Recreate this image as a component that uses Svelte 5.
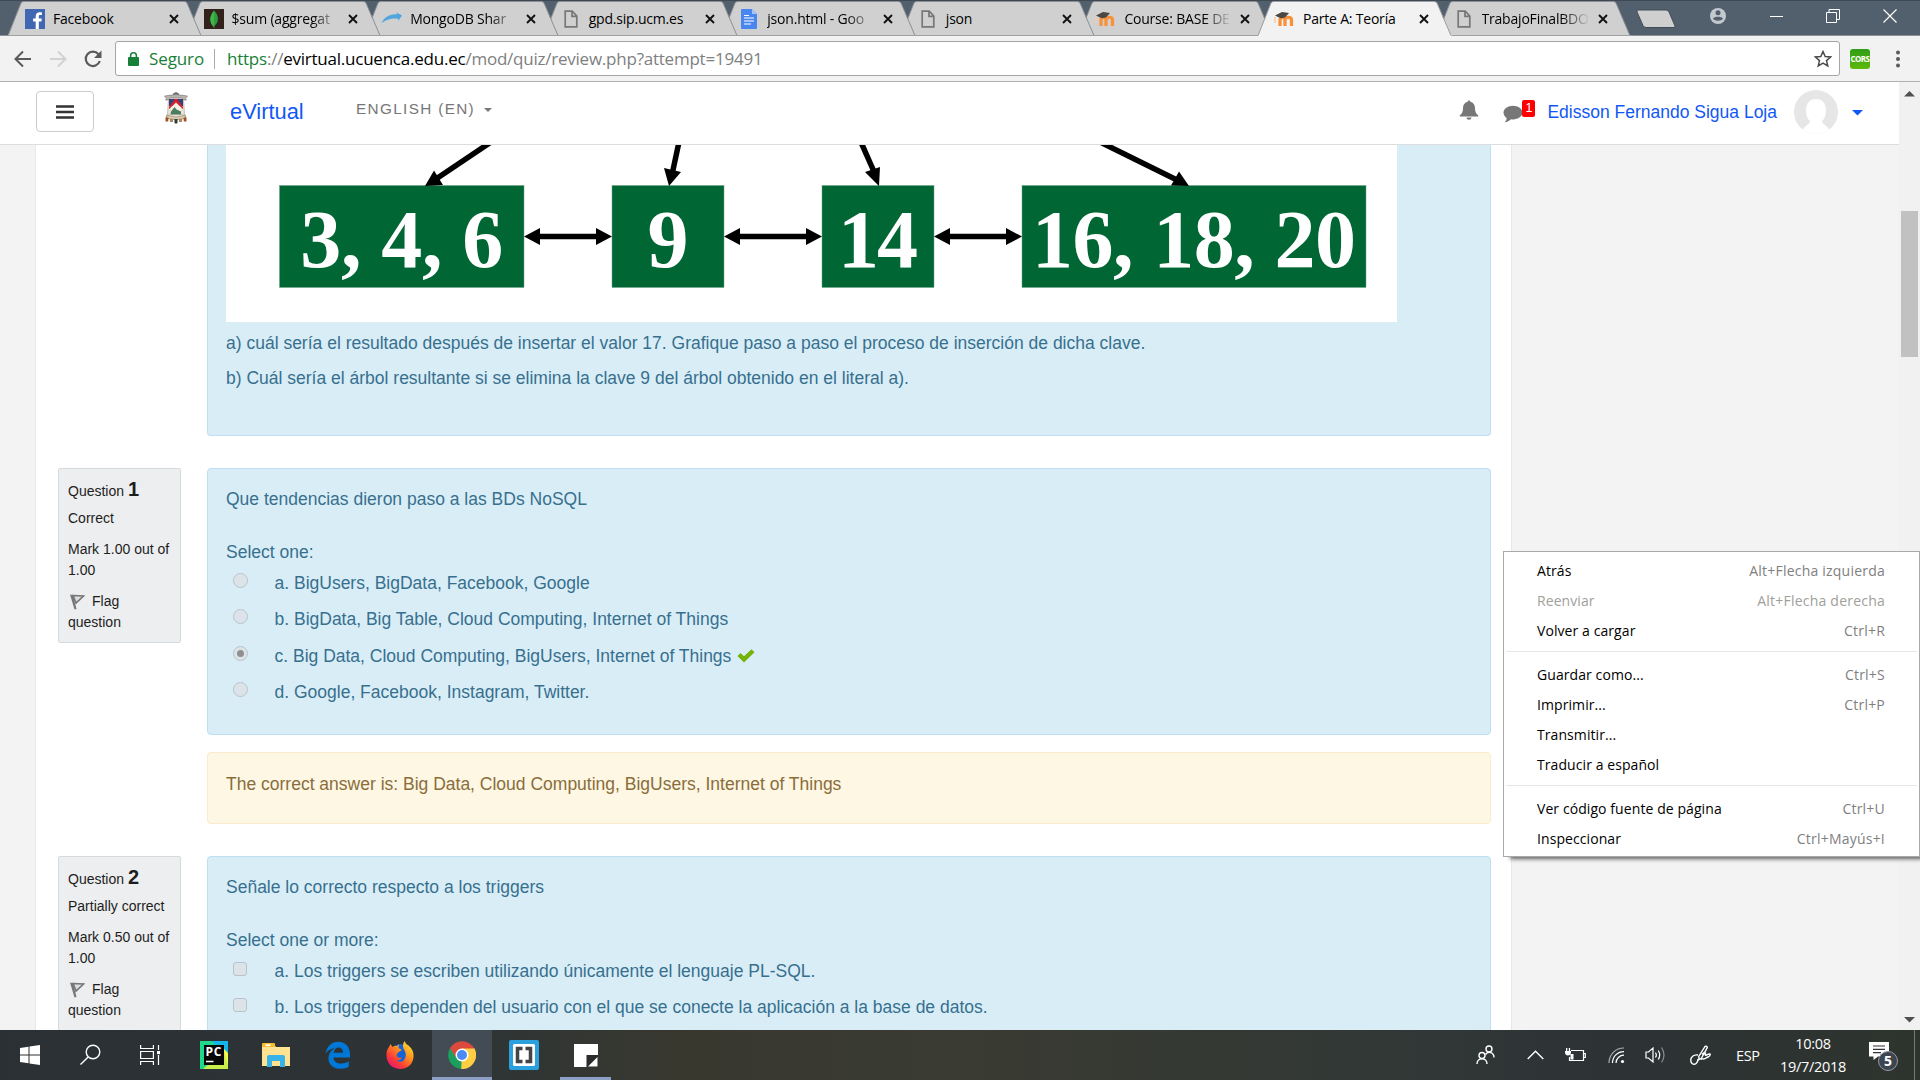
<script>
  const tabs = [
    { icon: 'facebook', title: 'Facebook' },
    { icon: 'leaf', title: '$sum (aggregat', fade: true },
    { icon: 'swoosh', title: 'MongoDB Shar', fade: true },
    { icon: 'page', title: 'gpd.sip.ucm.es' },
    { icon: 'doc', title: 'json.html - Goo', fade: true },
    { icon: 'page', title: 'json' },
    { icon: 'moodle', title: 'Course: BASE DE', fade: true },
    { icon: 'moodle', title: 'Parte A: Teoría', active: true },
    { icon: 'page', title: 'TrabajoFinalBDO', fade: true },
  ];

  const questions = [
    {
      number: 1,
      state: 'Correct',
      mark: 'Mark 1.00 out of 1.00',
      text: 'Que tendencias dieron paso a las BDs NoSQL',
      prompt: 'Select one:',
      kind: 'radio',
      options: [
        { text: 'a. BigUsers, BigData, Facebook, Google' },
        { text: 'b. BigData, Big Table, Cloud Computing, Internet of Things' },
        { text: 'c. Big Data, Cloud Computing, BigUsers, Internet of Things', checked: true },
        { text: 'd. Google, Facebook, Instagram, Twitter.' },
      ],
      feedback: 'The correct answer is: Big Data, Cloud Computing, BigUsers, Internet of Things',
    },
    {
      number: 2,
      state: 'Partially correct',
      mark: 'Mark 0.50 out of 1.00',
      text: 'Señale lo correcto respecto a los triggers',
      prompt: 'Select one or more:',
      kind: 'box',
      options: [
        { text: 'a. Los triggers se escriben utilizando únicamente el lenguaje PL-SQL.' },
        { text: 'b. Los triggers dependen del usuario con el que se conecte la aplicación a la base de datos.' },
      ],
    },
  ];

  const menu = [
    [
      { label: 'Atrás', keys: 'Alt+Flecha izquierda' },
      { label: 'Reenviar', keys: 'Alt+Flecha derecha', disabled: true },
      { label: 'Volver a cargar', keys: 'Ctrl+R' },
    ],
    [
      { label: 'Guardar como...', keys: 'Ctrl+S' },
      { label: 'Imprimir...', keys: 'Ctrl+P' },
      { label: 'Transmitir...', keys: '' },
      { label: 'Traducir a español', keys: '' },
    ],
    [
      { label: 'Ver código fuente de página', keys: 'Ctrl+U' },
      { label: 'Inspeccionar', keys: 'Ctrl+Mayús+I' },
    ],
  ];

  const nodes = [
    { x: 53.5, w: 244.5, text: '3, 4, 6', len: 203 },
    { x: 386, w: 112, text: '9', len: 40 },
    { x: 596, w: 112, text: '14', len: 80 },
    { x: 796, w: 344, text: '16, 18, 20', len: 324 },
  ];
  const links = [[298, 386], [498, 596], [708, 796]];
</script>

<div class="screen">
  <div class="tabstrip">
    <div class="tabs">
      {#each tabs as tab, i}
        <div class="tab" class:active={tab.active} style:z-index={tab.active ? 20 : 10 - i}>
          <svg class="shape" viewBox="0 0 194 36" width="194" height="36">
            <path d="M0 36 L1 34 L13 3 Q14 1.5 16 1.5 H176 Q178 1.5 179 3 L192 34 L194 36 Z" class="fill" />
            <path d="M0 35.5 L13 3 Q14 1.5 16 1.5 H176 Q178 1.5 179 3 L193 35.5" class="edge" />
            {#if !tab.active}<path d="M0 35.5 H194" class="base" />{/if}
          </svg>
          <div class="tabbody">
            <span class="fav">
              {#if tab.icon === 'facebook'}
                <svg width="20" height="20" viewBox="0 0 20 20"><rect width="20" height="20" fill="#4267b2" /><path d="M13.8 20v-7.6h2.6l.4-3h-3V7.500c0-.9.3-1.400 1.500-1.400h1.600V3.400c-.3 0-1.200-.1-2.300-.1-2.300 0-3.900 1.400-3.900 4v2.100H8.100v3h2.600V20z" fill="#fff" /></svg>
              {:else if tab.icon === 'leaf'}
                <svg width="20" height="20" viewBox="0 0 20 20"><rect width="20" height="20" fill="#33211b" /><path d="M10 1.500c3 3 4.300 6 3.800 9.500-.4 3-1.800 4.500-3.300 5.800V19h-.8v-2.200C7.800 15.500 6.500 13.500 6.300 11 6 7.500 7.500 4.500 10 1.500z" fill="#2f9e41" /><path d="M10 2v16c-2-1.500-3.500-4-3.600-7C6.200 7.500 7.800 4.500 10 2z" fill="#41b648" /></svg>
              {:else if tab.icon === 'swoosh'}
                <svg width="22" height="20" viewBox="0 0 22 20"><path d="M.5 14C3 8.500 9 4.500 16 5.400L15.500 3.500 21 6.500 17.500 11.500 17 9.800C10.500 8.800 5 10.800 .5 14z" fill="#4fa5dc" /></svg>
              {:else if tab.icon === 'doc'}
                <svg width="16" height="20" viewBox="0 0 16 20"><path d="M1 0h10l5 5v14a1 1 0 0 1-1 1H1a1 1 0 0 1-1-1V1a1 1 0 0 1 1-1z" fill="#4a86f0" /><path d="M11 0l5 5h-5z" fill="#a6c5fa" /><path d="M3 9h10M3 12h10M3 15h7M3 6.500h5" stroke="#fff" stroke-width="1.200" /></svg>
              {:else if tab.icon === 'moodle'}
                <svg width="22" height="18" viewBox="0 0 22 18"><path d="M6 16V10c0-3 5-3.500 5 0v6M11 16v-6c0-3.500 6.500-3.500 6.500 0v6" fill="none" stroke="#f7923a" stroke-width="3.300" /><path d="M1 7v6" stroke="#f8c9a0" stroke-width="1.500" /><path d="M1 5.500L8 2l7 1-4 4.500-4 .7-2.500-1z" fill="#4a4745" /></svg>
              {:else}
                <svg width="14" height="18" viewBox="0 0 14 18"><path d="M1.200 1.200h7L12.800 6v10.800H1.200zM8 1.200V6.300h4.800" fill="none" stroke="#777" stroke-width="1.700" /></svg>
              {/if}
            </span>
            <span class="title" class:fade={tab.fade}>{tab.title}</span>
            <svg class="close" width="10" height="10" viewBox="0 0 10 10"><path d="M1 1l8 8M9 1l-8 8" stroke="#111" stroke-width="1.900" /></svg>
          </div>
        </div>
      {/each}
    </div>
    <svg class="newtab" width="41" height="20" viewBox="0 0 41 20"><path d="M2.500 1H30q2 0 3 2l6 14q.5 1.500-1 1.500H10q-2 0-3-2L1 3Q.5 1 2.500 1z" fill="#cfcfcf" stroke="#434d58" /></svg>
    <div class="winbtns">
      <svg width="18" height="18" viewBox="0 0 18 18"><circle cx="9" cy="9" r="8" fill="#c4c9ce" /><circle cx="9" cy="5.800" r="2.500" fill="#525f6d" /><path d="M4 11.500c1.500-2.500 8.500-2.500 10 0-1.500 3-8.500 3-10 0z" fill="#525f6d" /></svg>
      <svg width="14" height="14" viewBox="0 0 14 14"><path d="M0 7.500h13" stroke="#fff" /></svg>
      <svg width="14" height="14" viewBox="0 0 14 14"><path d="M.5 3.500h10v10H.5zM3 3V.5h10.500v10H11" fill="none" stroke="#fff" /></svg>
      <svg width="14" height="14" viewBox="0 0 14 14"><path d="M.5 .5l13 13M13.500 .5l-13 13" stroke="#fff" stroke-width="1.200" /></svg>
    </div>
  </div>

  <div class="toolbar">
    <svg width="18" height="18" viewBox="0 0 18 18"><path d="M17 9H2M9 1.500L1.500 9 9 16.500" fill="none" stroke="#5a5a5a" stroke-width="2" /></svg>
    <svg width="18" height="18" viewBox="0 0 18 18"><path d="M1 9h15M9 1.500L16.500 9 9 16.500" fill="none" stroke="#d2d2d2" stroke-width="2" /></svg>
    <svg width="18" height="18" viewBox="0 0 18 18"><path d="M15.800 11A7.200 7.200 0 1 1 14.500 4.200" fill="none" stroke="#5a5a5a" stroke-width="2.200" /><path d="M17.500 .5v7.500H10z" fill="#5a5a5a" /></svg>
    <div class="omnibox">
      <svg width="11" height="14" viewBox="0 0 11 14"><rect y="5" width="11" height="9" rx="1" fill="#188038" /><path d="M2.600 6V3.700a2.900 2.900 0 0 1 5.800 0V6" fill="none" stroke="#188038" stroke-width="1.500" /></svg>
      <span class="secure">Seguro</span>
      <i></i>
      <span class="url"><b>https</b>://<em>evirtual.ucuenca.edu.ec</em>/mod/quiz/review.php?attempt=19491</span>
      <svg class="star" width="18" height="18" viewBox="0 0 18 18"><path d="M9 1.500l2.200 5 5.500.5-4.200 3.600 1.300 5.400L9 13.200 4.200 16l1.300-5.400L1.300 7l5.500-.5z" fill="none" stroke="#4a4a4a" stroke-width="1.500" /></svg>
    </div>
    <div class="cors">CORS</div>
    <svg class="dots" width="4" height="18" viewBox="0 0 4 18"><g fill="#5a5a5a"><circle cx="2" cy="2.500" r="2" /><circle cx="2" cy="9" r="2" /><circle cx="2" cy="15.500" r="2" /></g></svg>
  </div>

  <div class="viewport">
    <div class="page">
      <header>
        <div class="burger"><svg width="18" height="14" viewBox="0 0 18 14"><path d="M0 1.500h18M0 7h18M0 12.500h18" stroke="#333" stroke-width="2.600" /></svg></div>
        <svg class="crest" width="24" height="32" viewBox="0 0 24 32">
          <path d="M9 1.500l3-1.500 3 1.500v2.500H9z" fill="#77736c" />
          <path d="M.5 4q11.500-3 23 0l-2 2.500 1 1.500h-3L18 6H6L4.500 8h-3l1-1.500z" fill="#b9b4ad" stroke="#777" stroke-width=".6" />
          <path d="M4.500 7h15l1 16h-17z" fill="#e9e4da" stroke="#a59a85" stroke-width=".6" />
          <path d="M5 7h14v7H5z" fill="#39407d" />
          <path d="M5 15L11 7h2l6 8v2l-7-6-7 6z" fill="#d3232b" />
          <path d="M12 10.500l5 5v5l-5 2-5-2v-5z" fill="#f5f3ea" />
          <path d="M7 19.500l3.500-4.500 2 2.500 4.500 2v3H6.500z" fill="#4d7d5e" />
          <path d="M2.500 23.500q9.500 3 19 0v3q-9.500 2-19 0z" fill="#ddd2bd" stroke="#8d7349" stroke-width=".7" />
          <path d="M1.500 25.500h2.800v4H1.500zM19.700 25.500h2.800v4h-2.800z" fill="#a5502c" />
          <path d="M6 27h3v3H6zM15 27h3v3h-3z" fill="#a08a60" />
          <path d="M10.500 27h3v3.500L12 32l-1.500-1.500z" fill="#35353c" />
        </svg>
        <span class="brand">eVirtual</span>
        <span class="lang">ENGLISH (EN)</span>
        <svg class="langcaret" width="8" height="4" viewBox="0 0 8 4"><path d="M0 0h8L4 4z" fill="#777" /></svg>
        <div class="user">
          <svg width="20" height="20" viewBox="0 0 20 20"><path d="M10 .5c.8 0 1.300.5 1.300 1.300C14.300 2.500 16 4.800 16 8c0 4 1.300 6 3.200 7.300v1.200H.8v-1.200C2.700 14 4 12 4 8c0-3.200 1.700-5.500 4.700-6.200C8.700 1 9.200.5 10 .5zM7.500 17.500h5a2.500 2.200 0 0 1-5 0z" fill="#777" /></svg>
          <span class="chat">
            <svg width="20" height="18" viewBox="0 0 20 18"><path d="M10 .8c5.200 0 9.500 3 9.500 6.800s-4.300 6.800-9.500 6.800c-.7 0-1.300 0-2-.2C6.500 15.700 4.300 17 1.700 17.300c1.300-1.300 2-2.700 2-4.200C1.700 11.800.5 9.800.5 7.600.5 3.800 4.800.8 10 .8z" fill="#777" /></svg>
            <span class="badge">1</span>
          </span>
          <span class="name">Edisson Fernando Sigua Loja</span>
          <svg class="avatar" width="44" height="44" viewBox="0 0 44 44"><defs><clipPath id="round"><circle cx="22" cy="22" r="22" /></clipPath></defs><g clip-path="url(#round)"><rect width="44" height="44" fill="#e6e6e6" /><path d="M22 9c6 0 10 4.500 10 11 0 5-1.500 9-4 11 0 3 6 5 8 10v4H8v-4c2-5 8-7 8-10-2.500-2-4-6-4-11C12 13.500 16 9 22 9z" fill="#fff" /></g></svg>
          <svg width="12" height="6" viewBox="0 0 12 6"><path d="M0 0h11L5.500 5.500z" fill="#1157f5" /></svg>
        </div>
      </header>

      <div class="scroll">
        <main>
          <section class="blue intro">
            <svg class="tree" width="1171" height="177" viewBox="0 0 1171 177">
              <rect width="1171" height="177" fill="#fff" />
              {#each nodes as n}
                <rect x={n.x} y="40.500" width={n.w} height="102" fill="#006633" stroke="#6fa287" stroke-width=".5" />
                <text x={n.x + n.w / 2} y="121.500" textLength={n.len}>{n.text}</text>
              {/each}
              {#each links as [a, b]}
                <path d="M{a + 10} 91.500H{b - 10}" stroke="#000" stroke-width="5.500" />
                <path d="M{a} 91.500l16-8.500v17zM{b} 91.500l-16-8.500v17z" />
              {/each}
              <g stroke="#000" stroke-width="5.500">
                <path d="M265 -3L207 36" /><path d="M453 -3L445.500 32" /><path d="M634 -5L649.500 30" /><path d="M872 -4L953 36" />
              </g>
              <path d="M199 41l9-15.500 9 14.500zM443 41l-5-18 17 4zM653 41l-14-14 15-5zM963 41l-10-14.500-8 14z" />
            </svg>
            <p>a) cuál sería el resultado después de insertar el valor 17. Grafique paso a paso el proceso de inserción de dicha clave.</p>
            <p>b) Cuál sería el árbol resultante si se elimina la clave 9 del árbol obtenido en el literal a).</p>
          </section>

          {#each questions as q}
            <article>
              <aside>
                <div class="no">Question <strong>{q.number}</strong></div>
                <div class="state">{q.state}</div>
                <div class="mark">{q.mark}</div>
                <div class="flag"><svg width="16" height="17" viewBox="0 0 16 17"><path d="M1 1.500l3 .8L7.500 16l-2 .5z" fill="#777" /><path d="M4 2.500l10.500.5L7 10z" fill="#ddd" stroke="#777" stroke-width="1.700" /></svg>Flag question</div>
              </aside>
              <div class="content">
                <section class="blue question">
                  <div class="qtext">{q.text}</div>
                  <div class="prompt">{q.prompt}</div>
                  {#each q.options as o}
                    <div class="option">
                      <span class={q.kind} class:checked={o.checked}></span>
                      <span>{o.text}</span>
                      {#if o.checked}<svg class="tick" width="18" height="14" viewBox="0 0 18 14"><path d="M.5 7l3-3L7 7.300 14.500 .3l3 2.900L7 13.500z" fill="#74b40a" /></svg>{/if}
                    </div>
                  {/each}
                </section>
                {#if q.feedback}<section class="feedback">{q.feedback}</section>{/if}
              </div>
            </article>
          {/each}
        </main>
      </div>
    </div>
    <div class="scrollbar">
      <svg width="11" height="6" viewBox="0 0 11 6"><path d="M0 5.500L5.500 0 11 5.500z" fill="#505050" /></svg>
      <div class="thumb"></div>
      <svg class="down" width="11" height="6" viewBox="0 0 11 6"><path d="M0 0L5.500 5.500 11 0z" fill="#505050" /></svg>
    </div>

    <div class="menu">
      {#each menu as group}
        <div class="group">
          {#each group as item}
            <div class="item" class:disabled={item.disabled}><span>{item.label}</span><kbd>{item.keys}</kbd></div>
          {/each}
        </div>
      {/each}
    </div>
  </div>

  <div class="taskbar">
    <div class="apps">
      <div class="app"><svg width="20" height="20" viewBox="0 0 20 20"><path d="M0 3l8.500-1.200v7.700H0zM9.500 1.600L20 0v9.500H9.500zM0 10.500h8.500v7.700L0 17zM9.500 10.500H20V20L9.500 18.500z" fill="#fff" /></svg></div>
      <div class="app"><svg width="22" height="22" viewBox="0 0 22 22"><circle cx="14" cy="8" r="6.800" fill="none" stroke="#fff" stroke-width="1.400" /><path d="M9.200 13L1.500 20.500" stroke="#fff" stroke-width="1.400" /></svg></div>
      <div class="app"><svg width="21" height="20" viewBox="0 0 21 20"><path d="M.6 0v3.500h12.800V0M.6 20v-3.500h12.800V20M.6 6.500h12.800v7H.6zM18.500 0v5M18.500 10v10" fill="none" stroke="#fff" stroke-width="1.200" /><path d="M17 6h3v3.200h-3z" fill="#fff" /></svg></div>
      <div class="app"><svg width="28" height="28" viewBox="0 0 28 28"><rect width="28" height="28" fill="#21d789" /><path d="M11 0h17v14L18 6z" fill="#12b6e8" /><path d="M10 28l13-4L20 4l8 8v16z" fill="#fcf84a" /><path d="M3 28L24 10l4 14v4z" fill="#c8ee4c" /><rect x="4" y="4" width="20" height="20" fill="#080808" /><text class="pc" x="5.500" y="15" textLength="16">PC</text><path d="M6 20.500h7.500" stroke="#fff" stroke-width="1.500" /></svg></div>
      <div class="app"><svg width="28" height="24" viewBox="0 0 28 24"><path d="M0 1h12l2 3h14v19H0z" fill="#ffe391" /><path d="M0 1q0-1 1-1h11q1 0 1 1v3H0z" fill="#f5bd2d" /><path d="M3.500 1.300h5v1.800h-5z" fill="#fff" /><path d="M5 24V14q0-2 2-2h14q2 0 2 2v10h-5v-6h-8v6z" fill="#38b2e8" /></svg></div>
      <div class="app"><svg width="26" height="28" viewBox="0 0 26 28"><path d="M.5 12.500C2 5 7 .8 13 .8c7.500 0 12 5.200 12 12.700v3H8.500c.3 4 3.300 6 7.500 6 3 0 5.500-1 7.800-2.300v5.500c-2.300 1.400-5.300 2-8.800 2C8 27.700 3.500 23.500 3.500 17.500c0-4.500 2.500-8.500 6.500-10.300C5.500 7.500 2.500 9.500.5 12.500zM8.700 11.800H18C18 8.500 16.500 6.500 13.500 6.500c-2.500 0-4.300 2-4.800 5.300z" fill="#0078d7" /></svg></div>
      <div class="app"><svg width="28" height="28" viewBox="0 0 28 28"><defs><linearGradient id="ff" x1="1" y1="0" x2=".2" y2="1"><stop offset="0" stop-color="#fff23a" /><stop offset=".4" stop-color="#ff9a1f" /><stop offset=".75" stop-color="#ff3b36" /><stop offset="1" stop-color="#e4127e" /></linearGradient></defs><circle cx="14.500" cy="13" r="10" fill="#1264d6" /><path d="M3 6l1.500-3 2 3Q9 4 11 5l2-2-.5 4 3.500 2-4 2.500-1.500 3Q12 18 16 16.500q-2 4-6.500 2.500Q16 23 19 17.500q2-5-1.500-10Q16 4 18.500 0q1 3 4 4.500Q28 9 27.500 16 26 27.500 14 28 1.500 27 .5 15 .2 9 3 6z" fill="url(#ff)" /></svg></div>
      <div class="app on"><svg width="28" height="28" viewBox="0 0 28 28"><path d="M14 14L2 7a14 14 0 0 0 11 21l6-10z" fill="#1b9f5d" /><path d="M14 14l-.8 14A14 14 0 0 0 26.200 7H14z" fill="#ffce43" /><path d="M2 7l5.500 9L14 7.500h12.200a14 14 0 0 0-24.200-.5z" fill="#dc4a3d" /><circle cx="14" cy="14" r="6.500" fill="#fff" /><circle cx="14" cy="14" r="5" fill="#4a8af4" /></svg></div>
      <div class="app"><svg width="30" height="30" viewBox="0 0 30 30"><rect width="30" height="30" rx="2" fill="#2aa0dc" /><rect x="4" y="4" width="22" height="22" rx="1.500" fill="#fff" /><path d="M13.500 8.500H8.500v13h5M16.500 8.500h5v13h-5" fill="none" stroke="#444" stroke-width="3.500" /></svg></div>
      <div class="app open"><svg width="24" height="23" viewBox="0 0 24 23"><path d="M0 0h24v11L12.500 23H0z" fill="#fff" /><path d="M24 11v12H12.500V11z" fill="#2b2b29" /><path d="M14 22V12.500h9.500z" fill="#2b2b29" /><path d="M23.500 13v9.500H14z" fill="#fff" /></svg></div>
    </div>
    <div class="tray">
      <svg width="19" height="20" viewBox="0 0 19 20"><g fill="none" stroke="#fff" stroke-width="1.400"><circle cx="6" cy="10.500" r="3" /><path d="M1 19c0-7 10-7 10 0" /><circle cx="13" cy="4" r="3" /><path d="M9.500 9.500C12 6 18 7 18 12.500" /></g></svg>
      <svg width="17" height="10" viewBox="0 0 17 10"><path d="M.7 9L8.500 1.200 16.300 9" fill="none" stroke="#fff" stroke-width="1.400" /></svg>
      <svg width="21" height="14" viewBox="0 0 21 14"><path d="M6 2.500h12.500v10H4.500V9M18.500 5.500h1.800v4h-1.800" fill="none" stroke="#fff" stroke-width="1.200" /><path d="M5.500 6h3v5.500h-3zM0 3h6v1.500c0 4-6 4-6 0zM1 0h1.300v3H1zM3.800 0h1.300v3H3.800z" fill="#fff" /></svg>
      <svg width="17" height="17" viewBox="0 0 17 17"><g fill="none" stroke="#fff" stroke-width="1.200"><path d="M1 16C1 7.500 7.500 1 16 1" opacity=".6" /><path d="M4.500 16C4.500 9.500 9.500 4.700 16 4.700M8 16c0-4.300 3.700-7.800 8-7.800" /></g><circle cx="14.500" cy="14.500" r="1.600" fill="#fff" /></svg>
      <svg width="21" height="18" viewBox="0 0 21 18"><g fill="none" stroke="#fff" stroke-width="1.200"><path d="M1 6h2.500L8 2v14l-4.500-4H1zM10.500 6.500q1.700 2.500 0 5M13.200 4.500q3 4.500 0 9" /><path d="M16.500 1.500q5 7.500 0 15" opacity=".45" /></g></svg>
      <svg width="21" height="20" viewBox="0 0 21 20"><path d="M9 14.500L8.800 11.500 15 1.500q2-.8 2.300 1L11.500 13zM12 9.500q2.500-3 3.500-1.500-1 3 1 2T20 9c1 3-2 2.500-4 4-2 2-4 0-5.500 1.500M8 10c-6-1-9 4.500-6 8.500 3 2 6-.5 6-4.500" fill="none" stroke="#fff" stroke-width="1.400" /></svg>
      <span class="esp">ESP</span>
      <div class="clock"><span>10:08</span><span>19/7/2018</span></div>
      <div class="note"><svg width="20" height="18" viewBox="0 0 20 18"><path d="M0 0h20v14.500H9L4.500 18v-3.500H0z" fill="#fff" /><path d="M4 4h12M4 7.300h12M4 10.600h8" stroke="#333" stroke-width="1.200" /></svg><span>5</span></div>
    </div>
  </div>
</div>

<style>
  :global(body) { margin: 0; overflow: hidden; }
  .screen { width: 1920px; height: 1080px; display: flex; flex-direction: column; overflow: hidden; font-family: 'Liberation Sans', Arial, sans-serif; }
  svg { display: block; flex: none; }

  .tabstrip { height: 36px; flex: none; display: flex; background: #525f6d; border-top: 1px solid #3f4954; box-sizing: border-box; box-shadow: inset 0 -1px #8d9298; font-family: 'Open Sans', 'Noto Sans', sans-serif; }
  .tabs { display: flex; padding-left: 8px; margin-top: -1px; }
  .tab { position: relative; display: grid; width: 194px; height: 36px; margin-right: -15.450px; flex: none; }
  .tab > * { grid-area: 1 / 1; }
  .fill { fill: #d0d0d0; }
  .active .fill { fill: #f2f2f2; }
  .edge { fill: none; stroke: #8b8f94; stroke-width: 1; }
  .active .edge { stroke: #9b9ea2; }
  .base { stroke: #a0a0a0; }
  .tabbody { display: flex; align-items: center; padding: 2px 0 0 17px; }
  .fav { width: 20px; display: flex; justify-content: center; margin-right: 8px; flex: none; }
  .title { width: 110px; white-space: nowrap; font-size: 14px; letter-spacing: -.2px; color: #000; line-height: 20px; }
  .fade { -webkit-mask-image: linear-gradient(90deg, #000 72%, transparent 98%); mask-image: linear-gradient(90deg, #000 72%, transparent 98%); }
  .close { margin-left: 6px; }
  .newtab { margin: 8px 0 0 21px; }
  .winbtns { display: flex; align-items: center; margin-left: 32px; gap: 43px; padding-bottom: 5px; }
  .winbtns svg:nth-child(2) { margin-right: -1px; }

  .toolbar { height: 46px; flex: none; box-sizing: border-box; display: flex; align-items: center; padding: 0 19px 0 14px; background: #f2f2f2; border-bottom: 1px solid #b0b0b0; font-family: 'Open Sans', 'Noto Sans', sans-serif; }
  .toolbar > svg { margin-right: 17px; }
  .toolbar > svg:nth-child(3) { margin-right: 13px; }
  .omnibox { width: 1725px; height: 35px; box-sizing: border-box; border: 1px solid #a5a5a5; border-radius: 3px; background: #fff; display: flex; align-items: center; padding-left: 12px; font-size: 17px; white-space: nowrap; }
  .secure { color: #188038; margin-left: 10px; width: 65px; letter-spacing: -.1px; }
  .omnibox i { width: 1px; height: 20px; background: #aaa; margin-right: 12px; }
  .url { color: #808080; letter-spacing: -.23px; }
  .url b { font-weight: 400; color: #188038; }
  .url em { font-style: normal; color: #000; }
  .star { margin-left: auto; margin-right: 7px; }
  .cors { width: 20px; height: 20px; margin-left: 10px; border-radius: 3px; background: linear-gradient(#2f9d16, #5fb90c); color: #fff; font: 700 8px/20px 'Open Sans', sans-serif; letter-spacing: -.6px; text-align: center; }
  .toolbar > .dots { margin: 0 0 0 26px; }

  .viewport { height: 948px; flex: none; display: flex; position: relative; }
  .page { width: 1899px; display: flex; flex-direction: column; overflow: hidden; }
  header { height: 63px; flex: none; box-sizing: border-box; border-bottom: 1px solid #ddd; background: #fff; display: flex; align-items: center; padding: 0 35px 0 36px; }
  .burger { width: 58px; height: 41px; box-sizing: border-box; border: 1px solid #ccc; border-radius: 4px; display: flex; align-items: center; justify-content: center; margin-bottom: 3px; }
  .crest { margin: 0 42px 10px 70px; }
  .brand { color: #1157f5; font-size: 21.875px; width: 126px; margin-bottom: 2px; }
  .lang { font-size: 15.300px; letter-spacing: 1.350px; color: #777; white-space: nowrap; width: 128px; margin-bottom: 8px; }
  .langcaret { margin-bottom: 6px; }
  .user { margin-left: auto; display: flex; align-items: center; color: #1157f5; font-size: 17.500px; }
  .user > svg:first-child { margin: 0 24px 6px 0; }
  .chat { display: flex; margin-right: 12px; margin-bottom: 3px; }
  .chat svg { margin-top: 4px; margin-right: -1px; }
  .badge { height: 17px; width: 13px; border-radius: 2px; background: #f00; color: #fff; font-size: 12.500px; line-height: 17px; text-align: center; margin: -1px 0 6px; }
  .name { white-space: nowrap; margin-bottom: 2px; }
  .avatar { margin: 0 14px 2px 17px; }

  .scroll { flex: 1; overflow: hidden; background: #f3f3f3; padding-left: 35px; }
  main { min-height: 100%; background: #fff; border: solid #e8e8e8; border-width: 0 1px; box-sizing: border-box; width: 1477px; padding-left: 22px; font-size: 17.500px; line-height: 26px; }
  .blue { background: #d9edf7; border: 1px solid #bcdff1; border-radius: 4px; color: #37708e; box-sizing: border-box; width: 1284px; padding-left: 18px; }
  .intro { height: 291px; margin-left: 149px; border-top: 0; border-radius: 0 0 4px 4px; }
  .tree { margin-bottom: 8px; }
  .tree text { font: 700 82px 'Liberation Serif', 'Times New Roman', serif; fill: #fff; text-anchor: middle; }
  p { margin: 0 0 9px; }
  article { display: flex; align-items: flex-start; margin-top: 32px; }
  aside { width: 123px; height: 175px; box-sizing: border-box; flex: none; margin-right: 26px; background: #edeeef; border: 1px solid #d5dadd; border-radius: 2px; padding: 10.500px 9px 0; font-size: 14px; line-height: 21px; color: #1d1d1d; }
  .no { height: 28px; }
  .no strong { font-size: 20px; line-height: 18px; }
  .state { margin-bottom: 10px; white-space: nowrap; }
  .mark { margin-bottom: 10px; }
  .flag svg { display: inline-block; vertical-align: -4px; margin: 0 7px 0 1px; }
  .question { height: 267px; padding-top: 17px; }
  .qtext { margin-bottom: 27px; }
  .option { display: flex; align-items: center; height: 36.300px; white-space: nowrap; }
  .radio, .box { width: 15px; height: 15px; box-sizing: border-box; border: 1px solid #b9c3c9; background: linear-gradient(#dde4e8, #dbe3ea); margin: 0 26.500px 5px 7px; flex: none; }
  .radio { border-radius: 50%; display: grid; place-items: center; }
  .box { width: 14px; height: 14px; border-radius: 3px; margin-right: 27.500px; }
  .checked::after { content: ''; width: 7px; height: 7px; border-radius: 50%; background: #8f8f8f; }
  .tick { margin-left: 6px; }
  .feedback { height: 72px; width: 1284px; box-sizing: border-box; margin-top: 17px; padding: 18px; background: #fdf7e3; border: 1px solid #faebcc; border-radius: 4px; color: #8a6d3b; }

  .scrollbar { width: 21px; background: #f1f1f1; display: flex; flex-direction: column; align-items: center; padding: 9px 0 7px; box-sizing: border-box; }
  .thumb { width: 17px; height: 146px; margin-top: 114px; background: #c1c1c1; }
  .down { margin-top: auto; }

  /* Context menu floats over the page */
  .menu { position: absolute; left: 1503px; top: 469px; width: 417px; height: 306px; box-sizing: border-box; background: #fff; border: 1px solid #a9a9a9; box-shadow: 5px 4px 4px -2px rgba(0, 0, 0, .6); padding: 3px 2px; font-family: 'Open Sans', 'Noto Sans', sans-serif; font-size: 14px; letter-spacing: .08px; }
  .group + .group { border-top: 1px solid #e6e6e6; margin-top: 6px; padding-top: 7px; }
  .item { display: flex; justify-content: space-between; align-items: center; height: 30px; padding: 0 32px 0 31px; color: #000; }
  kbd { font: inherit; color: #808080; letter-spacing: .22px; }
  .disabled, .disabled kbd { color: #a0a09a; }

  .taskbar { height: 50px; flex: none; display: flex; justify-content: space-between; color: #fff; background: linear-gradient(90deg, #2b3035 0, #2e3435 25%, #38382f 35%, #3a3b32 50%, #303736 75%, #2d3235 85%, #2e342d 100%); font-family: 'Open Sans', 'Noto Sans', sans-serif; }
  .apps { display: flex; }
  .app { width: 60px; display: flex; align-items: center; justify-content: center; margin-right: 2px; }
  .app:nth-child(1), .app:nth-child(2) { margin-right: 0; }
  .app:nth-child(3) { margin-right: 4px; }
  .app:nth-child(10) { margin-right: 0; }
  .on { background: #434b54; }
  .on, .open { box-shadow: inset 0 -3px #8d9fc4; }
  .app.open { width: 51px; margin-left: 4px; }
  .pc { font: 700 12px 'Open Sans', sans-serif; fill: #fff; }
  .tray { display: flex; align-items: center; width: 445px; box-sizing: border-box; border-right: 1px solid #777; margin-right: 5px; }
  .tray svg:nth-child(1) { margin: 0 32px 0 6px; }
  .tray svg:nth-child(2) { margin-right: 21px; }
  .tray svg:nth-child(3) { margin-right: 22px; }
  .tray svg:nth-child(4) { margin-right: 20px; }
  .tray svg:nth-child(5) { margin-right: 24px; }
  .tray svg:nth-child(6) { margin-right: 25px; }
  .esp { font-size: 14.500px; width: 42px; letter-spacing: -.4px; }
  .clock { width: 70px; display: flex; flex-direction: column; align-items: center; font-size: 14.500px; line-height: 23px; letter-spacing: -.3px; white-space: nowrap; margin-bottom: 1px; }
  .tray .note { display: flex; margin: -8px 0 0 21px; }
  .tray .note svg { margin: 0; }
  .note span { width: 20px; height: 20px; box-sizing: border-box; flex: none; border: 1px solid #99a; border-radius: 50%; background: #3c4550; font-weight: 700; font-size: 14px; line-height: 18px; text-align: center; margin: 9px 0 -11px -11px; }
</style>
